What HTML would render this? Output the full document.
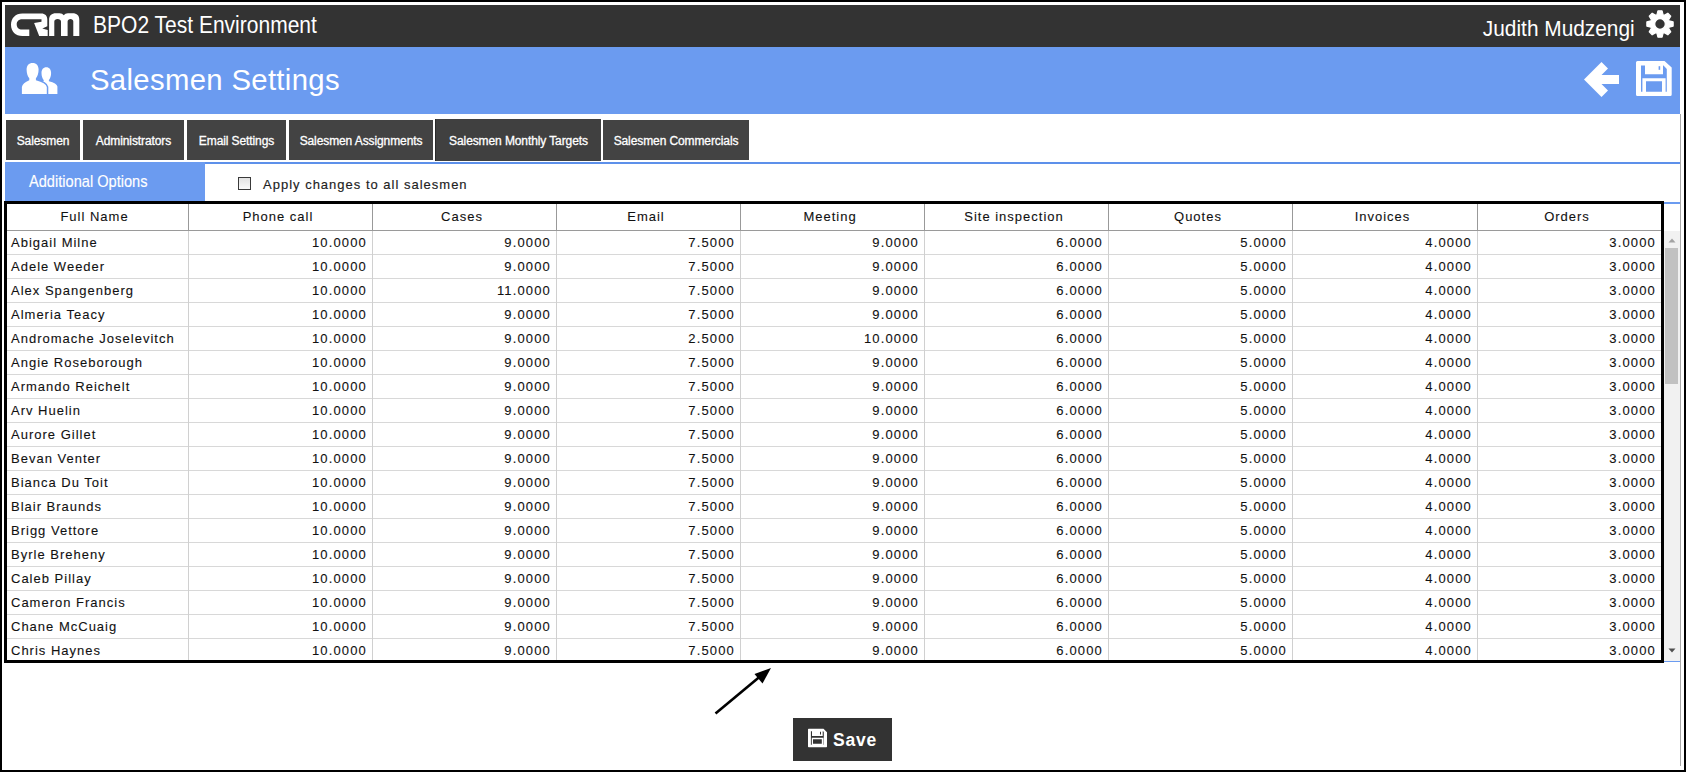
<!DOCTYPE html>
<html><head><meta charset="utf-8"><style>
*{margin:0;padding:0;box-sizing:border-box}
html,body{width:1686px;height:772px;overflow:hidden;background:#fff}
body{position:relative;font-family:"Liberation Sans",sans-serif}
.a{position:absolute}
.t{position:absolute;white-space:nowrap;line-height:1}
.vl{position:absolute;width:1px}
.hl{position:absolute;height:1px}
.cell{position:absolute;white-space:nowrap;font-size:13px;letter-spacing:0.9px;color:#111;line-height:16px;-webkit-text-stroke:0.1px #111}
.num{text-align:right}
.tab{position:absolute;top:120px;height:40px;background:#434343;color:#fff;font-size:12px;line-height:42px;white-space:nowrap;text-align:center;-webkit-text-stroke:0.3px #fff;letter-spacing:-0.1px}
</style></head><body>

<div class="a" style="left:0;top:0;width:1686px;height:772px;border:2px solid #000"></div>
<div class="a" style="left:5px;top:5px;width:1675px;height:42px;background:#333"></div>
<svg class="a" style="left:0;top:0.3px" width="90" height="45" viewBox="0 0 90 45">
<g fill="#fff">
<path d="M29.3 36 V29.5 H22 C18.8 29.5 16.7 27.5 16.7 24.5 C16.7 21.4 18.8 19.3 22 19.3 H41.5 L41.5 21.7 L34.1 23 L39.2 36 H47.7 V30 L42.3 28.6 L47.3 26.3 V19.5 C47.3 15.5 45 13.4 41.3 13.4 H22.4 C15.5 13.4 11 18 11 24.7 C11 31.4 15.5 36 22.4 36 Z"/>
<path d="M49.1 36 V20 C49.1 15.5 51.5 13.3 56 13.3 H59.5 C61.5 13.3 62.8 14 63.8 15.3 C64.8 14 66 13.3 68 13.3 H72.5 C77 13.3 79.3 15.5 79.3 20 V36 H73.3 V21.5 C73.3 19.8 72 18.9 70.5 18.9 C69 18.9 67.6 19.8 67.6 21.5 V36 H61 V21.5 C61 19.8 59.5 18.9 57.6 18.9 C55.7 18.9 54.3 19.8 54.3 21.5 V36 Z"/>
</g></svg>
<div class="t" style="left:93px;top:14.2px;font-size:23.1px;transform:scaleX(0.91);transform-origin:0 0;color:#fff">BPO2 Test Environment</div>
<div class="t" style="right:51px;top:16.8px;font-size:22.9px;transform:scaleX(0.911);transform-origin:100% 0;color:#fff">Judith Mudzengi</div>
<svg class="a" style="left:1645.7px;top:10px" width="28" height="28" viewBox="0 0 28 28">
<path fill="#fff" stroke="#fff" stroke-width="1.2" stroke-linejoin="round" fill-rule="evenodd" d="M10.87 4.92 L11.92 0.86 L16.08 0.86 L17.13 4.92 L18.21 5.37 L21.82 3.24 L24.76 6.18 L22.63 9.79 L23.08 10.87 L27.14 11.92 L27.14 16.08 L23.08 17.13 L22.63 18.21 L24.76 21.82 L21.82 24.76 L18.21 22.63 L17.13 23.08 L16.08 27.14 L11.92 27.14 L10.87 23.08 L9.79 22.63 L6.18 24.76 L3.24 21.82 L5.37 18.21 L4.92 17.13 L0.86 16.08 L0.86 11.92 L4.92 10.87 L5.37 9.79 L3.24 6.18 L6.18 3.24 L9.79 5.37Z M14 8.7 A5.3 5.3 0 1 0 14 19.3 A5.3 5.3 0 1 0 14 8.7 Z"/></svg>
<div class="a" style="left:5px;top:47px;width:1675px;height:67px;background:#6b9bf0"></div>
<svg class="a" style="left:15px;top:58px" width="48" height="40" viewBox="15 58 48 40">
<path fill="#fff" d="M46.3 67.3 C49.4 67.3 51.1 69.6 51.1 73 C51.1 76.2 50.2 78.4 48.9 79.9 L48.9 81.3 Q56.8 83.2 57.4 86.5 V94 H35 V86.5 Q35.6 83.2 43.7 81.3 L43.7 79.9 C42.4 78.4 41.5 76.2 41.5 73 C41.5 69.6 43.2 67.3 46.3 67.3 Z"/>
<path fill="#fff" stroke="#6b9bf0" stroke-width="3" paint-order="stroke" d="M32.6 62.9 C36.4 62.9 38.6 65.5 38.6 69.6 C38.6 73.5 37.4 76.5 35.9 78.3 L35.9 80.3 Q46 83 46.8 87 V95.5 H21.9 V87 Q22.7 83 29.3 80.3 L29.3 78.3 C27.8 76.5 26.6 73.5 26.6 69.6 C26.6 65.5 28.8 62.9 32.6 62.9 Z"/>
<rect x="15" y="94" width="48" height="4" fill="#6b9bf0"/>
</svg>
<div class="t" style="left:90px;top:64.9px;font-size:29.3px;letter-spacing:0.33px;color:#fff">Salesmen Settings</div>
<svg class="a" style="left:1580px;top:58px" width="44" height="44" viewBox="1580 58 44 44">
<path fill="#fff" d="M1584 79.5 L1601.5 62 L1608 68.5 L1601.5 75 H1619 V84 H1601.5 L1608 90.5 L1601.5 97 Z"/></svg>
<svg class="a" style="left:1630px;top:56px" width="48" height="46" viewBox="1630 56 48 46">
<path fill="#fff" fill-rule="evenodd" d="M1637.5 61 H1664.5 L1671.7 67.5 V94.5 Q1671.7 96 1670.2 96 H1637.5 Q1636 96 1636 94.5 V62.5 Q1636 61 1637.5 61 Z
M1641 65.5 V91.8 H1642.4 V78.3 H1665.6 V91.8 H1666.8 V69 L1663.5 65.5 H1663 V74.2 H1645 V65.5 Z
M1646 81.3 V91.8 H1662 V81.3 Z"/>
<rect x="1658.6" y="66.2" width="1.6" height="3.6" fill="#6b9bf0"/></svg>
<div class="vl" style="left:1680px;top:114px;height:652px;background:#a8a8a8"></div>
<div class="tab" style="left:6px;width:74px">Salesmen</div>
<div class="tab" style="left:83px;width:101px">Administrators</div>
<div class="tab" style="left:187px;width:99px">Email Settings</div>
<div class="tab" style="left:289px;width:144px">Salesmen Assignments</div>
<div class="tab" style="left:435px;top:119px;height:42px;line-height:44px;width:166px;background:#404040;border-left:1px solid #2a2a2a">Salesmen Monthly Targets</div>
<div class="tab" style="left:603px;width:146px">Salesmen Commercials</div>
<div class="a" style="left:5px;top:162px;width:1675px;height:2px;background:#5d90ea"></div>
<div class="a" style="left:5px;top:161.6px;width:200px;height:39.4px;background:#6b9bf0"></div>
<div class="t" style="left:28.5px;top:172.9px;font-size:16.2px;transform:scaleX(0.902);-webkit-text-stroke:0.15px #fff;transform-origin:0 0;color:#fff">Additional Options</div>
<div class="a" style="left:238px;top:177px;width:13px;height:13px;border:1px solid #3a3a3a;background:linear-gradient(#e2e2e2,#fafafa)"></div>
<div class="t" style="left:263px;top:178px;font-size:13px;letter-spacing:1.0px;color:#222;-webkit-text-stroke:0.15px #222">Apply changes to all salesmen</div>
<div class="a" style="left:5px;top:202px;width:1675px;height:2px;background:#6b9bf0"></div>
<div class="a" style="left:5px;top:660px;width:1675px;height:2px;background:#6b9bf0"></div>
<div class="cell" style="left:3px;top:209px;width:183px;text-align:center;letter-spacing:1.0px;color:#111">Full Name</div>
<div class="cell" style="left:186px;top:209px;width:184px;text-align:center;letter-spacing:1.0px;color:#111">Phone call</div>
<div class="cell" style="left:370px;top:209px;width:184px;text-align:center;letter-spacing:1.0px;color:#111">Cases</div>
<div class="cell" style="left:554px;top:209px;width:184px;text-align:center;letter-spacing:1.0px;color:#111">Email</div>
<div class="cell" style="left:738px;top:209px;width:184px;text-align:center;letter-spacing:1.0px;color:#111">Meeting</div>
<div class="cell" style="left:922px;top:209px;width:184px;text-align:center;letter-spacing:1.0px;color:#111">Site inspection</div>
<div class="cell" style="left:1106px;top:209px;width:184px;text-align:center;letter-spacing:1.0px;color:#111">Quotes</div>
<div class="cell" style="left:1290px;top:209px;width:185px;text-align:center;letter-spacing:1.0px;color:#111">Invoices</div>
<div class="cell" style="left:1475px;top:209px;width:184px;text-align:center;letter-spacing:1.0px;color:#111">Orders</div>
<div class="vl" style="left:188px;top:204px;height:27px;background:#999"></div>
<div class="vl" style="left:372px;top:204px;height:27px;background:#999"></div>
<div class="vl" style="left:556px;top:204px;height:27px;background:#999"></div>
<div class="vl" style="left:740px;top:204px;height:27px;background:#999"></div>
<div class="vl" style="left:924px;top:204px;height:27px;background:#999"></div>
<div class="vl" style="left:1108px;top:204px;height:27px;background:#999"></div>
<div class="vl" style="left:1292px;top:204px;height:27px;background:#999"></div>
<div class="vl" style="left:1477px;top:204px;height:27px;background:#999"></div>
<div class="hl" style="left:5px;top:230px;width:1656px;background:#9a9a9a"></div>
<div class="cell" style="left:11px;top:235px;letter-spacing:1.0px">Abigail Milne</div>
<div class="cell num" style="left:188px;top:235px;width:179px;letter-spacing:1.15px">10.0000</div>
<div class="cell num" style="left:372px;top:235px;width:179px;letter-spacing:1.15px">9.0000</div>
<div class="cell num" style="left:556px;top:235px;width:179px;letter-spacing:1.15px">7.5000</div>
<div class="cell num" style="left:740px;top:235px;width:179px;letter-spacing:1.15px">9.0000</div>
<div class="cell num" style="left:924px;top:235px;width:179px;letter-spacing:1.15px">6.0000</div>
<div class="cell num" style="left:1108px;top:235px;width:179px;letter-spacing:1.15px">5.0000</div>
<div class="cell num" style="left:1292px;top:235px;width:180px;letter-spacing:1.15px">4.0000</div>
<div class="cell num" style="left:1477px;top:235px;width:179px;letter-spacing:1.15px">3.0000</div>
<div class="hl" style="left:5px;top:254px;width:1656px;background:#d8d8d8"></div>
<div class="cell" style="left:11px;top:259px;letter-spacing:1.0px">Adele Weeder</div>
<div class="cell num" style="left:188px;top:259px;width:179px;letter-spacing:1.15px">10.0000</div>
<div class="cell num" style="left:372px;top:259px;width:179px;letter-spacing:1.15px">9.0000</div>
<div class="cell num" style="left:556px;top:259px;width:179px;letter-spacing:1.15px">7.5000</div>
<div class="cell num" style="left:740px;top:259px;width:179px;letter-spacing:1.15px">9.0000</div>
<div class="cell num" style="left:924px;top:259px;width:179px;letter-spacing:1.15px">6.0000</div>
<div class="cell num" style="left:1108px;top:259px;width:179px;letter-spacing:1.15px">5.0000</div>
<div class="cell num" style="left:1292px;top:259px;width:180px;letter-spacing:1.15px">4.0000</div>
<div class="cell num" style="left:1477px;top:259px;width:179px;letter-spacing:1.15px">3.0000</div>
<div class="hl" style="left:5px;top:278px;width:1656px;background:#d8d8d8"></div>
<div class="cell" style="left:11px;top:283px;letter-spacing:1.0px">Alex Spangenberg</div>
<div class="cell num" style="left:188px;top:283px;width:179px;letter-spacing:1.15px">10.0000</div>
<div class="cell num" style="left:372px;top:283px;width:179px;letter-spacing:1.15px">11.0000</div>
<div class="cell num" style="left:556px;top:283px;width:179px;letter-spacing:1.15px">7.5000</div>
<div class="cell num" style="left:740px;top:283px;width:179px;letter-spacing:1.15px">9.0000</div>
<div class="cell num" style="left:924px;top:283px;width:179px;letter-spacing:1.15px">6.0000</div>
<div class="cell num" style="left:1108px;top:283px;width:179px;letter-spacing:1.15px">5.0000</div>
<div class="cell num" style="left:1292px;top:283px;width:180px;letter-spacing:1.15px">4.0000</div>
<div class="cell num" style="left:1477px;top:283px;width:179px;letter-spacing:1.15px">3.0000</div>
<div class="hl" style="left:5px;top:302px;width:1656px;background:#d8d8d8"></div>
<div class="cell" style="left:11px;top:307px;letter-spacing:1.0px">Almeria Teacy</div>
<div class="cell num" style="left:188px;top:307px;width:179px;letter-spacing:1.15px">10.0000</div>
<div class="cell num" style="left:372px;top:307px;width:179px;letter-spacing:1.15px">9.0000</div>
<div class="cell num" style="left:556px;top:307px;width:179px;letter-spacing:1.15px">7.5000</div>
<div class="cell num" style="left:740px;top:307px;width:179px;letter-spacing:1.15px">9.0000</div>
<div class="cell num" style="left:924px;top:307px;width:179px;letter-spacing:1.15px">6.0000</div>
<div class="cell num" style="left:1108px;top:307px;width:179px;letter-spacing:1.15px">5.0000</div>
<div class="cell num" style="left:1292px;top:307px;width:180px;letter-spacing:1.15px">4.0000</div>
<div class="cell num" style="left:1477px;top:307px;width:179px;letter-spacing:1.15px">3.0000</div>
<div class="hl" style="left:5px;top:326px;width:1656px;background:#d8d8d8"></div>
<div class="cell" style="left:11px;top:331px;letter-spacing:1.0px">Andromache Joselevitch</div>
<div class="cell num" style="left:188px;top:331px;width:179px;letter-spacing:1.15px">10.0000</div>
<div class="cell num" style="left:372px;top:331px;width:179px;letter-spacing:1.15px">9.0000</div>
<div class="cell num" style="left:556px;top:331px;width:179px;letter-spacing:1.15px">2.5000</div>
<div class="cell num" style="left:740px;top:331px;width:179px;letter-spacing:1.15px">10.0000</div>
<div class="cell num" style="left:924px;top:331px;width:179px;letter-spacing:1.15px">6.0000</div>
<div class="cell num" style="left:1108px;top:331px;width:179px;letter-spacing:1.15px">5.0000</div>
<div class="cell num" style="left:1292px;top:331px;width:180px;letter-spacing:1.15px">4.0000</div>
<div class="cell num" style="left:1477px;top:331px;width:179px;letter-spacing:1.15px">3.0000</div>
<div class="hl" style="left:5px;top:350px;width:1656px;background:#d8d8d8"></div>
<div class="cell" style="left:11px;top:355px;letter-spacing:1.0px">Angie Roseborough</div>
<div class="cell num" style="left:188px;top:355px;width:179px;letter-spacing:1.15px">10.0000</div>
<div class="cell num" style="left:372px;top:355px;width:179px;letter-spacing:1.15px">9.0000</div>
<div class="cell num" style="left:556px;top:355px;width:179px;letter-spacing:1.15px">7.5000</div>
<div class="cell num" style="left:740px;top:355px;width:179px;letter-spacing:1.15px">9.0000</div>
<div class="cell num" style="left:924px;top:355px;width:179px;letter-spacing:1.15px">6.0000</div>
<div class="cell num" style="left:1108px;top:355px;width:179px;letter-spacing:1.15px">5.0000</div>
<div class="cell num" style="left:1292px;top:355px;width:180px;letter-spacing:1.15px">4.0000</div>
<div class="cell num" style="left:1477px;top:355px;width:179px;letter-spacing:1.15px">3.0000</div>
<div class="hl" style="left:5px;top:374px;width:1656px;background:#d8d8d8"></div>
<div class="cell" style="left:11px;top:379px;letter-spacing:1.0px">Armando Reichelt</div>
<div class="cell num" style="left:188px;top:379px;width:179px;letter-spacing:1.15px">10.0000</div>
<div class="cell num" style="left:372px;top:379px;width:179px;letter-spacing:1.15px">9.0000</div>
<div class="cell num" style="left:556px;top:379px;width:179px;letter-spacing:1.15px">7.5000</div>
<div class="cell num" style="left:740px;top:379px;width:179px;letter-spacing:1.15px">9.0000</div>
<div class="cell num" style="left:924px;top:379px;width:179px;letter-spacing:1.15px">6.0000</div>
<div class="cell num" style="left:1108px;top:379px;width:179px;letter-spacing:1.15px">5.0000</div>
<div class="cell num" style="left:1292px;top:379px;width:180px;letter-spacing:1.15px">4.0000</div>
<div class="cell num" style="left:1477px;top:379px;width:179px;letter-spacing:1.15px">3.0000</div>
<div class="hl" style="left:5px;top:398px;width:1656px;background:#d8d8d8"></div>
<div class="cell" style="left:11px;top:403px;letter-spacing:1.0px">Arv Huelin</div>
<div class="cell num" style="left:188px;top:403px;width:179px;letter-spacing:1.15px">10.0000</div>
<div class="cell num" style="left:372px;top:403px;width:179px;letter-spacing:1.15px">9.0000</div>
<div class="cell num" style="left:556px;top:403px;width:179px;letter-spacing:1.15px">7.5000</div>
<div class="cell num" style="left:740px;top:403px;width:179px;letter-spacing:1.15px">9.0000</div>
<div class="cell num" style="left:924px;top:403px;width:179px;letter-spacing:1.15px">6.0000</div>
<div class="cell num" style="left:1108px;top:403px;width:179px;letter-spacing:1.15px">5.0000</div>
<div class="cell num" style="left:1292px;top:403px;width:180px;letter-spacing:1.15px">4.0000</div>
<div class="cell num" style="left:1477px;top:403px;width:179px;letter-spacing:1.15px">3.0000</div>
<div class="hl" style="left:5px;top:422px;width:1656px;background:#d8d8d8"></div>
<div class="cell" style="left:11px;top:427px;letter-spacing:1.0px">Aurore Gillet</div>
<div class="cell num" style="left:188px;top:427px;width:179px;letter-spacing:1.15px">10.0000</div>
<div class="cell num" style="left:372px;top:427px;width:179px;letter-spacing:1.15px">9.0000</div>
<div class="cell num" style="left:556px;top:427px;width:179px;letter-spacing:1.15px">7.5000</div>
<div class="cell num" style="left:740px;top:427px;width:179px;letter-spacing:1.15px">9.0000</div>
<div class="cell num" style="left:924px;top:427px;width:179px;letter-spacing:1.15px">6.0000</div>
<div class="cell num" style="left:1108px;top:427px;width:179px;letter-spacing:1.15px">5.0000</div>
<div class="cell num" style="left:1292px;top:427px;width:180px;letter-spacing:1.15px">4.0000</div>
<div class="cell num" style="left:1477px;top:427px;width:179px;letter-spacing:1.15px">3.0000</div>
<div class="hl" style="left:5px;top:446px;width:1656px;background:#d8d8d8"></div>
<div class="cell" style="left:11px;top:451px;letter-spacing:1.0px">Bevan Venter</div>
<div class="cell num" style="left:188px;top:451px;width:179px;letter-spacing:1.15px">10.0000</div>
<div class="cell num" style="left:372px;top:451px;width:179px;letter-spacing:1.15px">9.0000</div>
<div class="cell num" style="left:556px;top:451px;width:179px;letter-spacing:1.15px">7.5000</div>
<div class="cell num" style="left:740px;top:451px;width:179px;letter-spacing:1.15px">9.0000</div>
<div class="cell num" style="left:924px;top:451px;width:179px;letter-spacing:1.15px">6.0000</div>
<div class="cell num" style="left:1108px;top:451px;width:179px;letter-spacing:1.15px">5.0000</div>
<div class="cell num" style="left:1292px;top:451px;width:180px;letter-spacing:1.15px">4.0000</div>
<div class="cell num" style="left:1477px;top:451px;width:179px;letter-spacing:1.15px">3.0000</div>
<div class="hl" style="left:5px;top:470px;width:1656px;background:#d8d8d8"></div>
<div class="cell" style="left:11px;top:475px;letter-spacing:1.0px">Bianca Du Toit</div>
<div class="cell num" style="left:188px;top:475px;width:179px;letter-spacing:1.15px">10.0000</div>
<div class="cell num" style="left:372px;top:475px;width:179px;letter-spacing:1.15px">9.0000</div>
<div class="cell num" style="left:556px;top:475px;width:179px;letter-spacing:1.15px">7.5000</div>
<div class="cell num" style="left:740px;top:475px;width:179px;letter-spacing:1.15px">9.0000</div>
<div class="cell num" style="left:924px;top:475px;width:179px;letter-spacing:1.15px">6.0000</div>
<div class="cell num" style="left:1108px;top:475px;width:179px;letter-spacing:1.15px">5.0000</div>
<div class="cell num" style="left:1292px;top:475px;width:180px;letter-spacing:1.15px">4.0000</div>
<div class="cell num" style="left:1477px;top:475px;width:179px;letter-spacing:1.15px">3.0000</div>
<div class="hl" style="left:5px;top:494px;width:1656px;background:#d8d8d8"></div>
<div class="cell" style="left:11px;top:499px;letter-spacing:1.0px">Blair Braunds</div>
<div class="cell num" style="left:188px;top:499px;width:179px;letter-spacing:1.15px">10.0000</div>
<div class="cell num" style="left:372px;top:499px;width:179px;letter-spacing:1.15px">9.0000</div>
<div class="cell num" style="left:556px;top:499px;width:179px;letter-spacing:1.15px">7.5000</div>
<div class="cell num" style="left:740px;top:499px;width:179px;letter-spacing:1.15px">9.0000</div>
<div class="cell num" style="left:924px;top:499px;width:179px;letter-spacing:1.15px">6.0000</div>
<div class="cell num" style="left:1108px;top:499px;width:179px;letter-spacing:1.15px">5.0000</div>
<div class="cell num" style="left:1292px;top:499px;width:180px;letter-spacing:1.15px">4.0000</div>
<div class="cell num" style="left:1477px;top:499px;width:179px;letter-spacing:1.15px">3.0000</div>
<div class="hl" style="left:5px;top:518px;width:1656px;background:#d8d8d8"></div>
<div class="cell" style="left:11px;top:523px;letter-spacing:1.0px">Brigg Vettore</div>
<div class="cell num" style="left:188px;top:523px;width:179px;letter-spacing:1.15px">10.0000</div>
<div class="cell num" style="left:372px;top:523px;width:179px;letter-spacing:1.15px">9.0000</div>
<div class="cell num" style="left:556px;top:523px;width:179px;letter-spacing:1.15px">7.5000</div>
<div class="cell num" style="left:740px;top:523px;width:179px;letter-spacing:1.15px">9.0000</div>
<div class="cell num" style="left:924px;top:523px;width:179px;letter-spacing:1.15px">6.0000</div>
<div class="cell num" style="left:1108px;top:523px;width:179px;letter-spacing:1.15px">5.0000</div>
<div class="cell num" style="left:1292px;top:523px;width:180px;letter-spacing:1.15px">4.0000</div>
<div class="cell num" style="left:1477px;top:523px;width:179px;letter-spacing:1.15px">3.0000</div>
<div class="hl" style="left:5px;top:542px;width:1656px;background:#d8d8d8"></div>
<div class="cell" style="left:11px;top:547px;letter-spacing:1.0px">Byrle Breheny</div>
<div class="cell num" style="left:188px;top:547px;width:179px;letter-spacing:1.15px">10.0000</div>
<div class="cell num" style="left:372px;top:547px;width:179px;letter-spacing:1.15px">9.0000</div>
<div class="cell num" style="left:556px;top:547px;width:179px;letter-spacing:1.15px">7.5000</div>
<div class="cell num" style="left:740px;top:547px;width:179px;letter-spacing:1.15px">9.0000</div>
<div class="cell num" style="left:924px;top:547px;width:179px;letter-spacing:1.15px">6.0000</div>
<div class="cell num" style="left:1108px;top:547px;width:179px;letter-spacing:1.15px">5.0000</div>
<div class="cell num" style="left:1292px;top:547px;width:180px;letter-spacing:1.15px">4.0000</div>
<div class="cell num" style="left:1477px;top:547px;width:179px;letter-spacing:1.15px">3.0000</div>
<div class="hl" style="left:5px;top:566px;width:1656px;background:#d8d8d8"></div>
<div class="cell" style="left:11px;top:571px;letter-spacing:1.0px">Caleb Pillay</div>
<div class="cell num" style="left:188px;top:571px;width:179px;letter-spacing:1.15px">10.0000</div>
<div class="cell num" style="left:372px;top:571px;width:179px;letter-spacing:1.15px">9.0000</div>
<div class="cell num" style="left:556px;top:571px;width:179px;letter-spacing:1.15px">7.5000</div>
<div class="cell num" style="left:740px;top:571px;width:179px;letter-spacing:1.15px">9.0000</div>
<div class="cell num" style="left:924px;top:571px;width:179px;letter-spacing:1.15px">6.0000</div>
<div class="cell num" style="left:1108px;top:571px;width:179px;letter-spacing:1.15px">5.0000</div>
<div class="cell num" style="left:1292px;top:571px;width:180px;letter-spacing:1.15px">4.0000</div>
<div class="cell num" style="left:1477px;top:571px;width:179px;letter-spacing:1.15px">3.0000</div>
<div class="hl" style="left:5px;top:590px;width:1656px;background:#d8d8d8"></div>
<div class="cell" style="left:11px;top:595px;letter-spacing:1.0px">Cameron Francis</div>
<div class="cell num" style="left:188px;top:595px;width:179px;letter-spacing:1.15px">10.0000</div>
<div class="cell num" style="left:372px;top:595px;width:179px;letter-spacing:1.15px">9.0000</div>
<div class="cell num" style="left:556px;top:595px;width:179px;letter-spacing:1.15px">7.5000</div>
<div class="cell num" style="left:740px;top:595px;width:179px;letter-spacing:1.15px">9.0000</div>
<div class="cell num" style="left:924px;top:595px;width:179px;letter-spacing:1.15px">6.0000</div>
<div class="cell num" style="left:1108px;top:595px;width:179px;letter-spacing:1.15px">5.0000</div>
<div class="cell num" style="left:1292px;top:595px;width:180px;letter-spacing:1.15px">4.0000</div>
<div class="cell num" style="left:1477px;top:595px;width:179px;letter-spacing:1.15px">3.0000</div>
<div class="hl" style="left:5px;top:614px;width:1656px;background:#d8d8d8"></div>
<div class="cell" style="left:11px;top:619px;letter-spacing:1.0px">Chane McCuaig</div>
<div class="cell num" style="left:188px;top:619px;width:179px;letter-spacing:1.15px">10.0000</div>
<div class="cell num" style="left:372px;top:619px;width:179px;letter-spacing:1.15px">9.0000</div>
<div class="cell num" style="left:556px;top:619px;width:179px;letter-spacing:1.15px">7.5000</div>
<div class="cell num" style="left:740px;top:619px;width:179px;letter-spacing:1.15px">9.0000</div>
<div class="cell num" style="left:924px;top:619px;width:179px;letter-spacing:1.15px">6.0000</div>
<div class="cell num" style="left:1108px;top:619px;width:179px;letter-spacing:1.15px">5.0000</div>
<div class="cell num" style="left:1292px;top:619px;width:180px;letter-spacing:1.15px">4.0000</div>
<div class="cell num" style="left:1477px;top:619px;width:179px;letter-spacing:1.15px">3.0000</div>
<div class="hl" style="left:5px;top:638px;width:1656px;background:#d8d8d8"></div>
<div class="cell" style="left:11px;top:643px;letter-spacing:1.0px">Chris Haynes</div>
<div class="cell num" style="left:188px;top:643px;width:179px;letter-spacing:1.15px">10.0000</div>
<div class="cell num" style="left:372px;top:643px;width:179px;letter-spacing:1.15px">9.0000</div>
<div class="cell num" style="left:556px;top:643px;width:179px;letter-spacing:1.15px">7.5000</div>
<div class="cell num" style="left:740px;top:643px;width:179px;letter-spacing:1.15px">9.0000</div>
<div class="cell num" style="left:924px;top:643px;width:179px;letter-spacing:1.15px">6.0000</div>
<div class="cell num" style="left:1108px;top:643px;width:179px;letter-spacing:1.15px">5.0000</div>
<div class="cell num" style="left:1292px;top:643px;width:180px;letter-spacing:1.15px">4.0000</div>
<div class="cell num" style="left:1477px;top:643px;width:179px;letter-spacing:1.15px">3.0000</div>
<div class="vl" style="left:188px;top:231px;height:430px;background:#d0d0d0"></div>
<div class="vl" style="left:372px;top:231px;height:430px;background:#d0d0d0"></div>
<div class="vl" style="left:556px;top:231px;height:430px;background:#d0d0d0"></div>
<div class="vl" style="left:740px;top:231px;height:430px;background:#d0d0d0"></div>
<div class="vl" style="left:924px;top:231px;height:430px;background:#d0d0d0"></div>
<div class="vl" style="left:1108px;top:231px;height:430px;background:#d0d0d0"></div>
<div class="vl" style="left:1292px;top:231px;height:430px;background:#d0d0d0"></div>
<div class="vl" style="left:1477px;top:231px;height:430px;background:#d0d0d0"></div>
<div class="a" style="left:1664px;top:231px;width:16px;height:430px;background:#f1f1f1"></div>
<div class="a" style="left:1665px;top:248px;width:13px;height:136px;background:#c1c1c1"></div>
<svg class="a" style="left:1664px;top:234px" width="16" height="12"><path d="M4.5 8.5 L8 4.5 L11.5 8.5 Z" fill="#a3a3a3"/></svg>
<svg class="a" style="left:1664px;top:645px" width="16" height="12"><path d="M4.5 3.5 L8 7.5 L11.5 3.5 Z" fill="#505050"/></svg>
<div class="a" style="left:4px;top:201px;width:1660px;height:462px;border:3px solid #000"></div>
<svg class="a" style="left:700px;top:660px" width="80" height="60" viewBox="700 660 80 60">
<line x1="715.5" y1="713.5" x2="760" y2="676.5" stroke="#000" stroke-width="2.6"/>
<path d="M771 668 L754.5 674 L762.5 683.5 Z" fill="#000"/></svg>
<div class="a" style="left:793px;top:718px;width:99px;height:43px;background:#333"></div>
<svg class="a" style="left:800px;top:720px" width="34" height="34" viewBox="800 720 34 34">
<path fill="#fff" fill-rule="evenodd" d="M808.7 728.7 H823.5 L827 732.2 V746.5 Q827 747.2 826.3 747.2 H808.7 Q808 747.2 808 746.5 V729.4 Q808 728.7 808.7 728.7 Z
M810.9 731.3 H812 V736 H822.7 V731.3 H823.2 L823.8 732 V744.7 H823.4 V737.8 H811.8 V744.7 H810.9 Z
M813 739.2 H821.8 V743.8 H813 Z
M820 731.8 H821 V734.5 H820 Z"/></svg>
<div class="t" style="left:833px;top:732px;font-size:17.5px;font-weight:bold;letter-spacing:0.8px;color:#fff">Save</div>
</body></html>
